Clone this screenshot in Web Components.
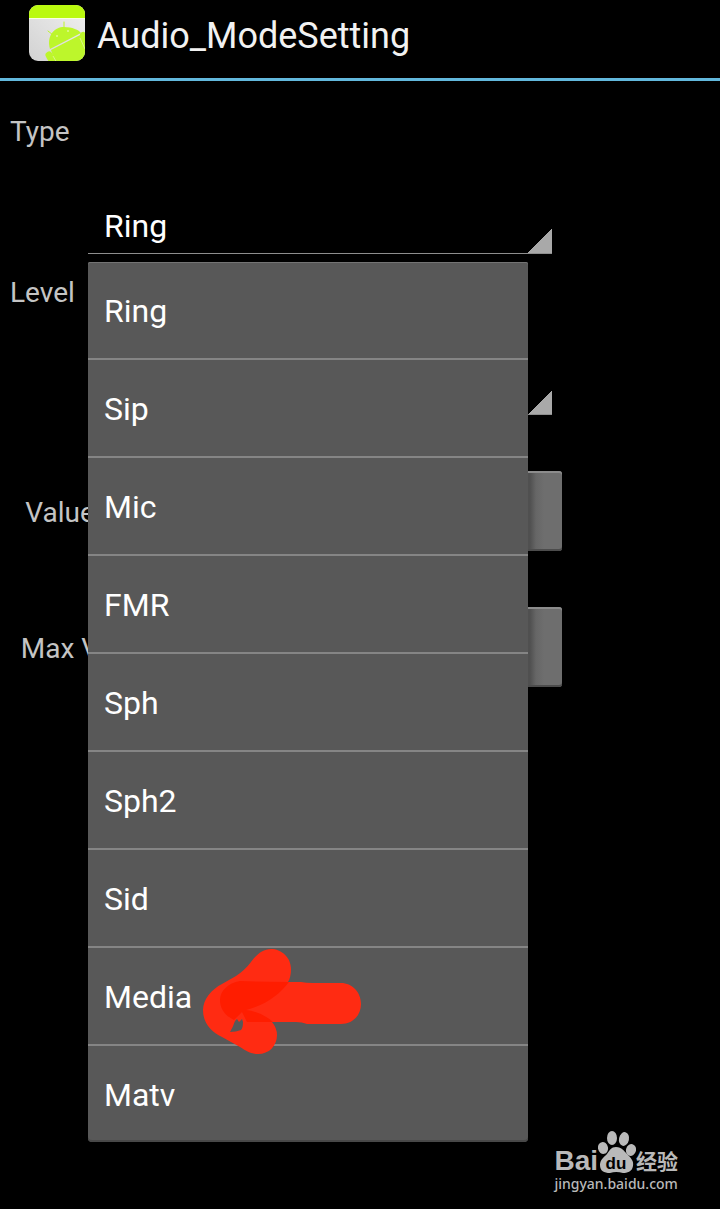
<!DOCTYPE html>
<html lang="en">
<head>
<meta charset="utf-8">
<meta name="viewport" content="width=device-width, initial-scale=1">
<title>Audio_ModeSetting</title>
<style>
    body {
        margin: 0;
        background-color: #000;
        color: #c4c4c4;
        font-family: Roboto, "Noto Sans", sans-serif;
        font-size: 28px;
        line-height: 34px;
    }
</style>
</head>
<body>
<mode-setting-app></mode-setting-app>

<script>
// Top bar: app icon and title
class ActionBar extends HTMLElement {
    constructor() {
        super();
        this.attachShadow({ mode: 'open' });
        this.shadowRoot.innerHTML = `
            <style>
                :host {
                    display: block;
                    border-bottom: 3px solid #62b8dc;
                }

                header {
                    display: flex;
                    gap: 12px;
                    height: 68px;
                    padding: 5px 29px;
                }

                svg {
                    width: 56px;
                    height: 56px;
                }

                h1 {
                    margin: 8px 0 0;
                    color: #f2f2f2;
                    font-size: 36px;
                    font-weight: 400;
                    line-height: 46px;
                }
            </style>
            <header>
                <svg viewBox="0 0 56 56" aria-hidden="true">
                    <defs>
                        <clipPath id="tile"><rect width="56" height="56" rx="9"/></clipPath>
                        <linearGradient id="paper" x1="1" y1="0" x2="0" y2="1">
                            <stop offset="0" stop-color="#f1f1f1"/>
                            <stop offset="1" stop-color="#d2d2d2"/>
                        </linearGradient>
                    </defs>
                    <g clip-path="url(#tile)">
                        <rect width="56" height="56" fill="url(#paper)"/>
                        <rect width="56" height="13" fill="#baf90f"/>
                        <rect y="13" width="56" height="1" fill="#f8ffe0"/>
                        <g fill="#bdf62b" stroke="#bdf62b">
                            <path d="M19 26l5 4M35 17v6" fill="none" stroke-width="1" stroke-linecap="round"/>
                            <path d="M21 44C17 30 26 22 35 22C43 22 50 25 52 28Z" stroke="none"/>
                            <path d="M22 45L53 29Q58 40 60 58H26Z" stroke="none"/>
                            <path d="M54 30l4 8" stroke-width="6" stroke-linecap="round"/>
                            <path d="M20 50l5 9" stroke-width="7" stroke-linecap="round"/>
                        </g>
                        <path d="M24 51l4 7M51 33l5 11" fill="none" stroke="#d9f58a" stroke-width="1"/>
                        <circle cx="28" cy="31" r="1" fill="#e0fa98"/>
                        <circle cx="39" cy="26" r="1" fill="#e0fa98"/>
                    </g>
                </svg>
                <h1><slot></slot></h1>
            </header>
        `;
    }
}

// Label with a spinner below it, its menu goes in the slot
class SpinnerField extends HTMLElement {
    constructor() {
        super();
        this.attachShadow({ mode: 'open' });
        const label = this.getAttribute('label');
        const value = this.getAttribute('value') || '';
        this.shadowRoot.innerHTML = `
            <style>
                :host {
                    display: block;
                }

                label {
                    display: block;
                    margin-bottom: 49px;
                }

                .spinner {
                    position: relative;
                    margin: 0 10px 0 78px;
                }

                select {
                    display: block;
                    box-sizing: border-box;
                    width: 100%;
                    height: 56px;
                    padding: 0 16px;
                    appearance: none;
                    border: none;
                    border-bottom: 1px solid #8e8e8e;
                    border-radius: 0;
                    background: linear-gradient(135deg, transparent 50%, #a9a9a9 50%) right bottom / 24px 24px no-repeat;
                    color: #fff;
                    font: inherit;
                    font-size: 32px;
                }
            </style>
            <label for="choice">${label}</label>
            <div class="spinner">
                <select id="choice"><option>${value}</option></select>
                <slot></slot>
            </div>
        `;
    }
}

// Opened list of the spinner
class SpinnerMenu extends HTMLElement {
    constructor() {
        super();
        this.attachShadow({ mode: 'open' });
        this.shadowRoot.innerHTML = `
            <style>
                :host {
                    position: absolute;
                    z-index: 1;
                    top: calc(100% + 8px);
                    left: 0;
                    right: 24px;
                    border-radius: 2px 2px 4px 4px;
                    background-color: #585858;
                    box-shadow: inset 0 1px #747474, inset 0 -2px #484848;
                }
            </style>
            <slot></slot>
        `;
    }

    connectedCallback() {
        this.setAttribute('role', 'listbox');
    }
}

class SpinnerItem extends HTMLElement {
    constructor() {
        super();
        this.attachShadow({ mode: 'open' });
        this.shadowRoot.innerHTML = `
            <style>
                :host {
                    display: block;
                    position: relative;
                    border-bottom: 2px solid #858585;
                }

                :host(:last-of-type) {
                    border-bottom: none;
                }

                button {
                    display: block;
                    width: 100%;
                    height: 96px;
                    padding: 2px 16px 0;
                    border: none;
                    background: none;
                    color: #fff;
                    font: inherit;
                    font-size: 32px;
                    text-align: left;
                    cursor: pointer;
                }
            </style>
            <button type="button"><slot></slot></button>
            <slot name="mark"></slot>
        `;
    }
}

// Hand drawn red arrow
class MarkerArrow extends HTMLElement {
    constructor() {
        super();
        this.attachShadow({ mode: 'open' });
        this.shadowRoot.innerHTML = `
            <style>
                :host {
                    position: absolute;
                    z-index: 1;
                    top: 0;
                    left: 114px;
                    pointer-events: none;
                }

                svg {
                    display: block;
                    width: 160px;
                    height: 108px;
                }
            </style>
            <svg viewBox="202 948 160 108" aria-hidden="true">
                <path fill="#ff2b12" d="M271 949C281 949 291 957 291 969C291 974 290 979 288 982L301 982Q306 983 313 983H341C352 983 361 992 361 1004C361 1016 352 1024 341 1024H307Q302 1022 296 1022H272Q277 1028 277 1035C277 1046 269 1054 258 1054C250 1054 245 1050 240 1047L222 1037C211 1032 203 1023 203 1010C203 999 212 989 222 984L236 976Q245 970 251 962C257 954 263 949 271 949Z"/>
                <path fill="#ff1d00" d="M240 981Q262 982 289 982C280 994 266 1005 246 1010Q262 1012 273 1022H247L242 1012L234 1020C224 1015 220 1008 220 1000C220 991 228 983 240 981Z"/>
                <path fill="#585858" d="M230 1032Q233 1027 235 1021L237 1019L239 1022L242 1019L243 1022Q243 1028 241 1030Q236 1032 230 1032Z"/>
            </svg>
        `;
    }
}

// Label, number box and button on one line
class ValueRow extends HTMLElement {
    constructor() {
        super();
        this.attachShadow({ mode: 'open' });
        this.shadowRoot.innerHTML = `
            <style>
                :host {
                    display: grid;
                    grid-template-columns: 100px 1fr 40px;
                    align-items: center;
                    height: 80px;
                }

                label {
                    padding-top: 4px;
                    text-align: center;
                    white-space: nowrap;
                }

                input {
                    min-width: 0;
                    margin: 0 16px;
                    border: none;
                    background: none;
                    color: #fff;
                    font: inherit;
                }

                button {
                    height: 80px;
                    padding: 0;
                    border: none;
                    border-radius: 3px;
                    background: linear-gradient(90deg, #505050 8px, #666 14px, #6e6e6e 22px);
                    box-shadow: inset 0 2px #8c8c8c, inset 0 -2px #4c4c4c;
                }
            </style>
            <label for="amount"><slot></slot></label>
            <input id="amount" type="text" inputmode="numeric">
            <button type="button" aria-label="Set"></button>
        `;
    }
}

class SiteMark extends HTMLElement {
    constructor() {
        super();
        this.attachShadow({ mode: 'open' });
        this.shadowRoot.innerHTML = `
            <style>
                :host {
                    display: flex;
                    flex-direction: column;
                    color: #b9b9b9;
                }

                .logo {
                    display: flex;
                    align-items: flex-end;
                    height: 42px;
                }

                .latin {
                    font-family: "Liberation Sans", sans-serif;
                    font-size: 28px;
                    font-weight: 700;
                    line-height: 24px;
                }

                svg {
                    width: 38px;
                    height: 42px;
                }

                .han {
                    font-family: "Noto Sans CJK SC", sans-serif;
                    font-size: 21px;
                    font-weight: 700;
                    line-height: 26px;
                }

                .url {
                    font-family: "Noto Sans", sans-serif;
                    font-size: 14px;
                    font-weight: 500;
                    line-height: 22px;
                }
            </style>
            <div class="logo">
                <span class="latin">Bai</span>
                <svg viewBox="0 0 38 42" fill="#b9b9b9" aria-hidden="true">
                    <ellipse cx="5" cy="17" rx="5" ry="6" transform="rotate(-12 5 17)"/>
                    <ellipse cx="14" cy="7" rx="5" ry="7"/>
                    <ellipse cx="26" cy="8" rx="5" ry="7" transform="rotate(12 26 8)"/>
                    <ellipse cx="33" cy="19" rx="5" ry="6" transform="rotate(15 33 19)"/>
                    <path d="M18 16C24 16 26 20 29 23C33 27 36 30 35 35C34 41 29 42 25 42Q18 40 12 42C6 42 2 40 2 34C2 29 6 26 9 23C12 19 13 16 18 16Z"/>
                    <text x="18" y="38" fill="#000" font-family="Liberation Sans, sans-serif" font-size="17" font-weight="700" text-anchor="middle">du</text>
                </svg>
                <span class="han">经验</span>
            </div>
            <span class="url">jingyan.baidu.com</span>
        `;
    }
}

class ModeSettingApp extends HTMLElement {
    constructor() {
        super();
        this.attachShadow({ mode: 'open' });
        this.items = ['Ring', 'Sip', 'Mic', 'FMR', 'Sph', 'Sph2', 'Sid', 'Media', 'Matv'];
        this._render();
    }

    _renderItem(name) {
        const mark = name === 'Media' ? '<marker-arrow slot="mark"></marker-arrow>' : '';
        return `<spinner-item role="option">${name}${mark}</spinner-item>`;
    }

    _render() {
        this.shadowRoot.innerHTML = `
            <style>
                :host {
                    display: flex;
                    flex-direction: column;
                    min-height: 100vh;
                }

                main {
                    display: flex;
                    flex-direction: column;
                    padding: 34px 158px 0 10px;
                }

                spinner-field + spinner-field {
                    margin-top: 22px;
                }

                value-row {
                    margin-top: 56px;
                }

                footer {
                    display: flex;
                    justify-content: flex-end;
                    margin-top: auto;
                    padding: 0 42px 14px;
                }
            </style>
            <action-bar>Audio_ModeSetting</action-bar>
            <main>
                <spinner-field label="Type" value="Ring">
                    <spinner-menu>${this.items.map((name) => this._renderItem(name)).join('')}</spinner-menu>
                </spinner-field>
                <spinner-field label="Level"></spinner-field>
                <value-row>Value</value-row>
                <value-row>Max V</value-row>
            </main>
            <footer><site-mark></site-mark></footer>
        `;
    }
}

customElements.define('action-bar', ActionBar);
customElements.define('spinner-field', SpinnerField);
customElements.define('spinner-menu', SpinnerMenu);
customElements.define('spinner-item', SpinnerItem);
customElements.define('marker-arrow', MarkerArrow);
customElements.define('value-row', ValueRow);
customElements.define('site-mark', SiteMark);
customElements.define('mode-setting-app', ModeSettingApp);
</script>
</body>
</html>
